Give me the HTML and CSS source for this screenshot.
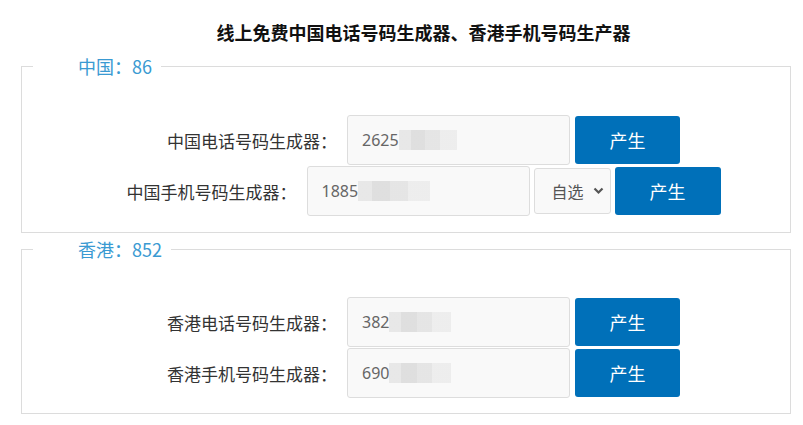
FILE: index.html
```html
<!DOCTYPE html>
<html lang="zh-CN">
<head>
<meta charset="utf-8">
<title>线上免费中国电话号码生成器</title>
<link rel="stylesheet" href="styles.css">
</head>
<body>
<h1 class="title">线上免费中国电话号码生成器、香港手机号码生产器</h1>
<div class="wrap">
  <fieldset class="group">
    <legend class="legend">中国：86</legend>
    <div class="rows">
      <div class="row">
        <label class="label">中国电话号码生成器：</label>
        <div class="field"><span class="num">2625</span><span class="mosaic m1"></span></div>
        <button class="btn">产生</button>
      </div>
      <div class="row">
        <label class="label">中国手机号码生成器：</label>
        <div class="field"><span class="num">1885</span><span class="mosaic m2"></span></div>
        <div class="select"><span>自选</span><svg class="chev" width="11" height="8" viewBox="0 0 11 8"><polyline points="1.5,1.5 5.5,5.5 9.5,1.5" fill="none" stroke="#555" stroke-width="2.2"/></svg></div>
        <button class="btn">产生</button>
      </div>
    </div>
  </fieldset>
  <fieldset class="group second">
    <legend class="legend">香港：852</legend>
    <div class="rows">
      <div class="row">
        <label class="label">香港电话号码生成器：</label>
        <div class="field"><span class="num">382</span><span class="mosaic m3"></span></div>
        <button class="btn">产生</button>
      </div>
      <div class="row">
        <label class="label">香港手机号码生成器：</label>
        <div class="field"><span class="num">690</span><span class="mosaic m4"></span></div>
        <button class="btn">产生</button>
      </div>
    </div>
  </fieldset>
</div>
</body>
</html>
```
FILE: styles.css
```css
* { box-sizing: border-box; }
html, body { margin: 0; padding: 0; background: #fff; }
body {
  font-family: "Noto Sans", "Noto Sans CJK SC", sans-serif;
  color: #333;
}
.title {
  margin: 0;
  padding: 20px 0 0 44px;
  height: 54px;
  font-size: 18px;
  line-height: 24px;
  font-weight: bold;
  text-align: center;
  color: #111;
  font-family: "Noto Sans CJK SC", sans-serif;
}
.wrap {
  padding: 0 12px 0 21px;
}
.group {
  margin: 0;
  padding: 0;
  border: 1px solid #dcdcdc;
  min-width: 0;
}
.second { margin-top: 4px; }
.legend {
  margin-left: 11px;
  padding: 0 9px 0 45px;
  font-size: 18px;
  line-height: 24px;
  color: #3a9ad2;
  font-family: "Noto Sans CJK SC", sans-serif;
}
.rows {
  display: flex;
  flex-direction: column;
  gap: 1px;
  padding: 37px 0 16px 35px;
}
.second .rows { padding-top: 36px; padding-bottom: 15px; }
.row {
  display: flex;
  justify-content: center;
  align-items: center;
  height: 50px;
}
.label {
  font-size: 17px;
  font-family: "Noto Sans CJK SC", sans-serif;
  color: #333;
  margin-right: 10px;
  white-space: nowrap;
}
.field {
  width: 223px;
  height: 50px;
  border: 1px solid #dddddd;
  border-radius: 3px;
  background: #f9f9f9;
  padding-left: 14px;
  display: flex;
  align-items: center;
  font-size: 16px;
  color: #666;
}
.mosaic {
  display: inline-block;
  height: 20px;
  background:
    linear-gradient(90deg, #e6e6e6 0 20%, #dcdcdc 20% 45%, #e3e3e3 45% 70%, #ececec 70% 100%);
  opacity: 0.9;
}
.m1 { width: 58px; }
.m2 { width: 72px; }
.m3 { width: 62px; }
.m4 { width: 62px; }
.select {
  width: 77px;
  height: 46px;
  margin-left: 4px;
  border: 1px solid #dddddd;
  border-radius: 3px;
  background: #f9f9f9;
  display: flex;
  align-items: center;
  justify-content: space-between;
  padding: 0 6px 0 17px;
  font-size: 16px;
  color: #555;
  font-family: "Noto Sans CJK SC", sans-serif;
}
.btn {
  width: 105px;
  height: 48px;
  margin-left: 5px;
  border: none;
  border-radius: 3px;
  background: #0070b9;
  color: #fff;
  font-size: 18px;
  font-family: "Noto Sans CJK SC", sans-serif;
  padding: 0;
}
.select + .btn { margin-left: 4px; width: 106px; }
```
